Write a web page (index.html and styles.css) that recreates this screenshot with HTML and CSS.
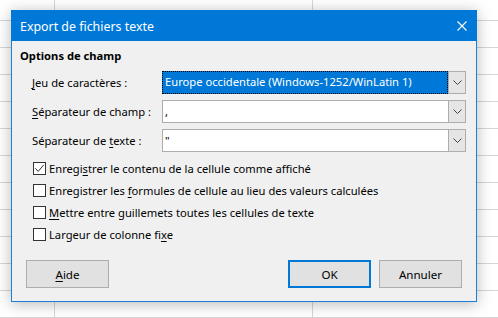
FILE: index.html
```html
<!DOCTYPE html>
<html lang="fr">
<head>
<meta charset="utf-8">
<title>Export de fichiers texte</title>
<link rel="stylesheet" href="styles.css">
</head>
<body>
<div class="sheet">
  <div class="dialog">
    <div class="titlebar">
      <span class="title">Export de fichiers texte</span>
      <svg class="close" width="10" height="10" viewBox="0 0 10 10"><path d="M0.5 0.5 L9.5 9.5 M9.5 0.5 L0.5 9.5" stroke="#fff" stroke-width="1.1" fill="none"/></svg>
    </div>
    <div class="content">
      <div class="heading">Options de champ</div>
      <div class="fields">
        <div class="row">
          <label class="lbl"><u>J</u>eu de caractères :</label>
          <div class="combo">
            <div class="value selected"><span>Europe occidentale (Windows-1252/WinLatin 1)</span></div>
            <div class="drop"><svg width="9" height="6" viewBox="0 0 9 6"><path d="M0.5 0.5 L4.5 4.5 L8.5 0.5" stroke="#444" stroke-width="1" fill="none"/></svg></div>
          </div>
        </div>
        <div class="row">
          <label class="lbl"><u>S</u>éparateur de champ :</label>
          <div class="combo">
            <div class="value">,</div>
            <div class="drop"><svg width="9" height="6" viewBox="0 0 9 6"><path d="M0.5 0.5 L4.5 4.5 L8.5 0.5" stroke="#444" stroke-width="1" fill="none"/></svg></div>
          </div>
        </div>
        <div class="row">
          <label class="lbl">Séparateur de <u>t</u>exte :</label>
          <div class="combo">
            <div class="value">"</div>
            <div class="drop"><svg width="9" height="6" viewBox="0 0 9 6"><path d="M0.5 0.5 L4.5 4.5 L8.5 0.5" stroke="#444" stroke-width="1" fill="none"/></svg></div>
          </div>
        </div>
      </div>
      <div class="checks">
        <label class="check"><span class="box"><svg width="11" height="11" viewBox="0 0 11 11"><path d="M1.3 5.3 L4.2 8.4 L9.8 1.8" stroke="#333" stroke-width="1" fill="none"/></svg></span><span class="txt">Enregi<u>s</u>trer le contenu de la cellule comme affiché</span></label>
        <label class="check"><span class="box"></span><span class="txt">Enregistrer les <u>f</u>ormules de cellule au lieu des valeurs calculées</span></label>
        <label class="check"><span class="box"></span><span class="txt"><u>M</u>ettre entre guillemets toutes les cellules de texte</span></label>
        <label class="check"><span class="box"></span><span class="txt">Largeur de colonne fi<u>x</u>e</span></label>
      </div>
      <div class="buttons">
        <button class="btn"><u>A</u>ide</button>
        <div class="spacer"></div>
        <button class="btn default">OK</button>
        <button class="btn">Annuler</button>
      </div>
    </div>
  </div>
</div>
</body>
</html>
```
FILE: styles.css
```css
html, body {
  margin: 0;
  padding: 0;
}
body {
  width: 498px;
  height: 318px;
  overflow: hidden;
  background: #fff;
  font-family: "Noto Sans", "Open Sans", sans-serif;
  font-size: 11.2px;
  color: #000;
}
.sheet {
  width: 498px;
  height: 318px;
  padding: 10px 0 0 11px;
  box-sizing: border-box;
  background-image:
    linear-gradient(to right, transparent 54px, #d6d6d6 54px, #d6d6d6 55px, transparent 55px, transparent 312px, #d6d6d6 312px, #d6d6d6 313px, transparent 313px),
    repeating-linear-gradient(to bottom, transparent 0, transparent 20px, #d6d6d6 20px, #d6d6d6 21px, transparent 21px, transparent 27px);
}
.dialog {
  width: 466px;
  height: 292px;
  box-sizing: border-box;
  border: 1px solid #1a7fd6;
  border-top: none;
  background: #f0f0f0;
  box-shadow: 0 2px 14px rgba(0, 0, 0, 0.28);
  display: flex;
  flex-direction: column;
}
.titlebar {
  height: 31px;
  background: #0078d7;
  display: flex;
  align-items: center;
  margin: 0 -1px;
  padding: 0 10px 0 9px;
  color: #fff;
  flex: none;
}
.title {
  flex: 1;
  font-size: 12.4px;
  margin-top: 1px;
}
.content {
  flex: 1;
  padding: 7px 10px 0 8px;
  display: flex;
  flex-direction: column;
}
.heading {
  font-weight: bold;
  line-height: 16px;
}
.fields {
  margin-top: 7px;
  padding-left: 12px;
  display: flex;
  flex-direction: column;
  gap: 6px;
}
.row {
  display: flex;
  align-items: center;
  height: 23px;
}
.lbl {
  width: 130px;
  flex: none;
}
u {
  text-decoration: underline;
  text-underline-offset: 2px;
}
.combo {
  width: 304px;
  height: 23px;
  box-sizing: border-box;
  border: 1px solid #adadad;
  background: #fff;
  display: flex;
}
.value {
  flex: 1;
  padding-left: 2px;
  line-height: 21px;
}
.value.selected {
  padding: 0;
  border: 1px dotted #000;
  background: #0078d7;
  color: #fff;
  line-height: 19px;
  margin: -1px 0 -1px -1px;
}
.value.selected span {
  padding-left: 2px;
}
.drop {
  width: 16px;
  flex: none;
  background: #e5e5e5;
  border-left: 1px solid #adadad;
  display: flex;
  align-items: center;
  justify-content: center;
}
.checks {
  margin-top: 5px;
  padding-left: 13px;
  display: flex;
  flex-direction: column;
}
.check {
  height: 22px;
  display: flex;
  align-items: center;
}
.box {
  width: 13px;
  height: 13px;
  box-sizing: border-box;
  border: 1px solid #333;
  background: #fff;
  margin-right: 3px;
  display: flex;
  align-items: center;
  justify-content: center;
  flex: none;
}
.buttons {
  margin-top: auto;
  margin-bottom: 13px;
  display: flex;
  gap: 8px;
  padding-left: 6px;
  padding-right: 4px;
}
.spacer {
  flex: 1;
}
.btn {
  width: 83px;
  height: 28px;
  box-sizing: border-box;
  background: #e1e1e1;
  border: 1px solid #adadad;
  font-family: inherit;
  font-size: 11.6px;
  color: #000;
  padding: 0;
}
.btn.default {
  border: 2px solid #0078d7;
}
```
